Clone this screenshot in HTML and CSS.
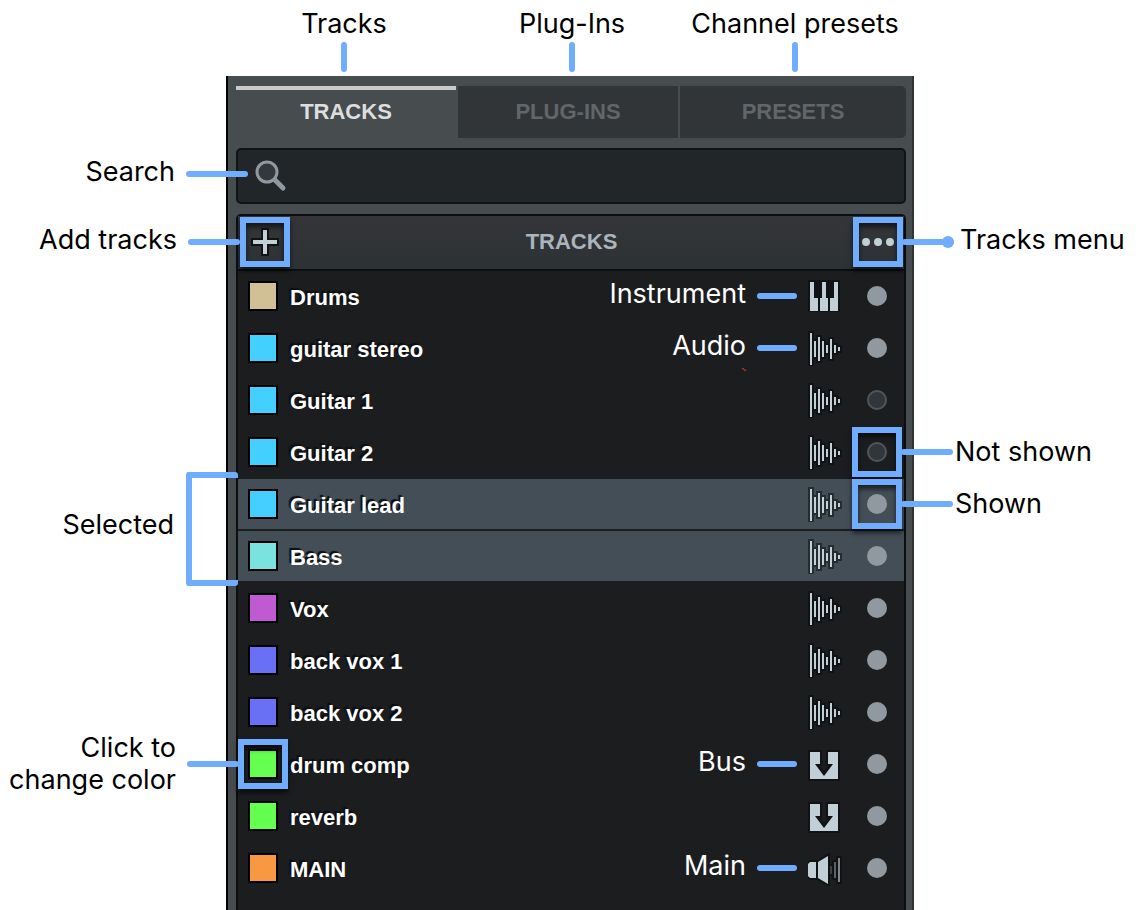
FILE: index.html
```
<!DOCTYPE html>
<html lang="en">
<head>
<meta charset="utf-8">
<title>Track list</title>
<link rel="stylesheet" href="styles.css">
</head>
<body>
<svg class="symbols" aria-hidden="true">
  <symbol id="audio" viewBox="0 0 36 36">
    <path class="edge" d="M2 3h2v32h-2zM6 11h2v16h-2zM10 7h2v24h-2zM14 11h2v16h-2zM18 15h2v8h-2zM22 9h2v20h-2zM26 15h2v8h-2zM30 17h2v4h-2z"/>
    <path class="fill" d="M2 3h2v32h-2zM6 11h2v16h-2zM10 7h2v24h-2zM14 11h2v16h-2zM18 15h2v8h-2zM22 9h2v20h-2zM26 15h2v8h-2zM30 17h2v4h-2z"/>
  </symbol>
  <symbol id="keys" viewBox="0 0 36 36">
    <path class="solid" d="M0 2h32v32h-32z"/>
    <path class="fill" d="M2 4h4v16h4v13h-8zM14 4h4v16h2v13h-8v-13h2zM26 4h4v29h-8v-13h4z"/>
  </symbol>
  <symbol id="bus" viewBox="0 0 36 36">
    <path class="edge" d="M2 6H12V18H8L16 29L24 18H20V6H30V33H2Z"/>
    <path class="fill" d="M2 6H12V18H7L16 30L25 18H20V6H30V33H2Z"/>
  </symbol>
  <symbol id="speaker" viewBox="0 0 36 36">
    <path class="edge" d="M3 12h5v16h-5q-3-2-3-4v-8q0-3 3-4zM10 13L20 6V34L10 28zM22 16h2v8h-2zM26 12h2v16h-2zM30 8h2v24h-2z"/>
    <path class="fill" d="M2 12h6v16h-6l-2-2v-12zM10 12L20 6V34L10 28z"/>
    <path class="wave-near" d="M22 16h2v8h-2z"/>
    <path class="wave-mid" d="M26 12h2v16h-2z"/>
    <path class="wave-far" d="M30 8h2v24h-2z"/>
  </symbol>
</svg>

<header class="top-notes">
  <div class="top-note">Tracks</div>
  <div class="top-note">Plug-Ins</div>
  <div class="top-note">Channel presets</div>
</header>

<main class="panel">
  <nav class="tabs">
    <button class="tab active" type="button">TRACKS</button>
    <button class="tab" type="button">PLUG-INS</button>
    <button class="tab" type="button">PRESETS</button>
  </nav>

  <div class="search">
    <svg class="search-icon" viewBox="0 0 32 32" aria-hidden="true">
      <path class="handle" d="M19 19L28 28"/>
      <circle class="lens" cx="12" cy="12" r="10"/>
    </svg>
    <input class="search-input" type="search" aria-label="Search tracks">
    <div class="note left raised search-note"><span>Search</span><i class="line long"></i></div>
  </div>

  <section class="list">
    <div class="list-head">
      <div class="anchor framed">
        <button class="head-button" type="button" aria-label="Add tracks">
          <svg class="glyph" viewBox="0 0 28 28" aria-hidden="true"><path class="edge" d="M12 2h4v10h10v4h-10v10h-4v-10h-10v-4h10z"/><path class="fill" d="M12 2h4v10h10v4h-10v10h-4v-10h-10v-4h10z"/></svg>
        </button>
        <div class="note left raised"><span>Add tracks</span><i class="line"></i></div>
      </div>
      <h2 class="list-title">TRACKS</h2>
      <div class="anchor framed">
        <button class="head-button" type="button" aria-label="Tracks menu">
          <svg class="dots" viewBox="0 0 36 12" aria-hidden="true"><circle class="fill" cx="6" cy="6" r="4"/><circle class="fill" cx="18" cy="6" r="4"/><circle class="fill" cx="30" cy="6" r="4"/></svg>
        </button>
        <div class="note right raised menu-note"><i class="line dotted"></i><span>Tracks menu</span></div>
      </div>
    </div>

    <ul class="rows">
      <li class="row">
        <div class="anchor"><button class="swatch sand" type="button" aria-label="Drums color"></button></div>
        <span class="name">Drums</span>
        <span class="kind">Instrument</span><i class="line short"></i>
        <svg class="icon"><use href="#keys"/></svg>
        <div class="anchor"><input class="show" type="checkbox" aria-label="Show Drums" checked></div>
      </li>
      <li class="row">
        <div class="anchor"><button class="swatch sky" type="button" aria-label="guitar stereo color"></button></div>
        <span class="name">guitar stereo</span>
        <span class="kind">Audio</span><i class="line short"></i>
        <svg class="speck" viewBox="0 0 4 3" aria-hidden="true"><path d="M0 0L4 3"/></svg>
        <svg class="icon"><use href="#audio"/></svg>
        <div class="anchor"><input class="show" type="checkbox" aria-label="Show guitar stereo" checked></div>
      </li>
      <li class="row">
        <div class="anchor"><button class="swatch sky" type="button" aria-label="Guitar 1 color"></button></div>
        <span class="name">Guitar 1</span>
        <svg class="icon"><use href="#audio"/></svg>
        <div class="anchor"><input class="show" type="checkbox" aria-label="Show Guitar 1"></div>
      </li>
      <li class="row">
        <div class="anchor"><button class="swatch sky" type="button" aria-label="Guitar 2 color"></button></div>
        <span class="name">Guitar 2</span>
        <svg class="icon"><use href="#audio"/></svg>
        <div class="anchor framed">
          <input class="show" type="checkbox" aria-label="Show Guitar 2">
          <div class="note right from-dot"><i class="line"></i><span>Not shown</span></div>
        </div>
      </li>
      <li class="row selected">
        <div class="bracket"><span>Selected</span></div>
        <div class="anchor"><button class="swatch sky" type="button" aria-label="Guitar lead color"></button></div>
        <span class="name">Guitar lead</span>
        <svg class="icon"><use href="#audio"/></svg>
        <div class="anchor framed">
          <input class="show" type="checkbox" aria-label="Show Guitar lead" checked>
          <div class="note right from-dot"><i class="line"></i><span>Shown</span></div>
        </div>
      </li>
      <li class="row selected">
        <div class="anchor"><button class="swatch aqua" type="button" aria-label="Bass color"></button></div>
        <span class="name">Bass</span>
        <svg class="icon"><use href="#audio"/></svg>
        <div class="anchor"><input class="show" type="checkbox" aria-label="Show Bass" checked></div>
      </li>
      <li class="row">
        <div class="anchor"><button class="swatch violet" type="button" aria-label="Vox color"></button></div>
        <span class="name">Vox</span>
        <svg class="icon"><use href="#audio"/></svg>
        <div class="anchor"><input class="show" type="checkbox" aria-label="Show Vox" checked></div>
      </li>
      <li class="row">
        <div class="anchor"><button class="swatch indigo" type="button" aria-label="back vox 1 color"></button></div>
        <span class="name">back vox 1</span>
        <svg class="icon"><use href="#audio"/></svg>
        <div class="anchor"><input class="show" type="checkbox" aria-label="Show back vox 1" checked></div>
      </li>
      <li class="row">
        <div class="anchor"><button class="swatch indigo" type="button" aria-label="back vox 2 color"></button></div>
        <span class="name">back vox 2</span>
        <svg class="icon"><use href="#audio"/></svg>
        <div class="anchor"><input class="show" type="checkbox" aria-label="Show back vox 2" checked></div>
      </li>
      <li class="row">
        <div class="anchor framed">
          <button class="swatch green" type="button" aria-label="drum comp color"></button>
          <div class="note left from-swatch"><span>Click to<br>change color</span><i class="line"></i></div>
        </div>
        <span class="name">drum comp</span>
        <span class="kind">Bus</span><i class="line short"></i>
        <svg class="icon"><use href="#bus"/></svg>
        <div class="anchor"><input class="show" type="checkbox" aria-label="Show drum comp" checked></div>
      </li>
      <li class="row">
        <div class="anchor"><button class="swatch green" type="button" aria-label="reverb color"></button></div>
        <span class="name">reverb</span>
        <svg class="icon"><use href="#bus"/></svg>
        <div class="anchor"><input class="show" type="checkbox" aria-label="Show reverb" checked></div>
      </li>
      <li class="row">
        <div class="anchor"><button class="swatch orange" type="button" aria-label="MAIN color"></button></div>
        <span class="name">MAIN</span>
        <span class="kind">Main</span><i class="line short"></i>
        <svg class="icon"><use href="#speaker"/></svg>
        <div class="anchor"><input class="show" type="checkbox" aria-label="Show MAIN" checked></div>
      </li>
    </ul>
  </section>
</main>
</body>
</html>
```
FILE: styles.css
```
*, *::before, *::after { box-sizing: border-box; }

:root {
  --note: #70adff;
  --ice: #c1cfd7;
  --edge: #101213;
}

body {
  margin: 0;
  min-height: 100vh;
  display: flex;
  flex-direction: column;
  background: #fff;
  color: #000;
  font: 27px/32px Inter, "Liberation Sans", sans-serif;
}

button, input { margin: 0; padding: 0; border: 0; background: none; font: inherit; }

.symbols { position: absolute; width: 0; height: 0; }
.fill { fill: var(--ice); }
.solid { fill: var(--edge); }
.edge { fill: var(--edge); stroke: var(--edge); stroke-width: 4; }
.wave-near { fill: #3c4145; }
.wave-mid { fill: #5a6267; }
.wave-far { fill: #7d878b; }

/* Labels above the panel */
.top-notes {
  display: grid;
  grid-template-columns: 228fr 228fr 218fr;
  height: 76px;
  padding: 8px 232px 4px 230px;
}
.top-note {
  display: flex;
  flex-direction: column;
  align-items: center;
  justify-content: space-between;
  white-space: nowrap;
}
.top-note::after {
  content: "";
  width: 6px;
  height: 30px;
  border-radius: 3px;
  background: var(--note);
}

/* Panel */
.panel {
  flex: 1;
  display: flex;
  flex-direction: column;
  gap: 10px;
  margin: 0 222px 0 226px;
  padding: 10px 6px 0 8px;
  border-left: 2px solid #000;
  border-right: 2px solid #2f3436;
  background: #474c4e;
}

.tabs { display: grid; grid-template-columns: 220fr 220fr 226fr; gap: 2px; }
.tab {
  height: 52px;
  background: #313537;
  color: #626668;
  font: bold 22px/24px "Liberation Sans", Arial, sans-serif;
}
.tab:last-child { border-radius: 0 5px 5px 0; }
.tab.active {
  border-top: 4px solid #c9cbcb;
  padding-bottom: 4px;
  background: none;
  color: #dcdedf;
}

.search {
  position: relative;
  display: flex;
  align-items: center;
  height: 56px;
  padding-left: 17px;
  border: 2px solid #111415;
  border-radius: 5px;
  background: #222629;
}
.search-icon { width: 32px; height: 32px; }
.lens { fill: #34373c; stroke: #8f999f; stroke-width: 3; }
.handle { fill: none; stroke: #8f999f; stroke-width: 5; stroke-linecap: round; }
.search-input { flex: 1; height: 52px; padding: 0 8px; color: #dcdedf; outline: none; }

.list {
  flex: 1;
  border: 2px solid #0c0e0f;
  border-bottom: 0;
  border-radius: 5px 5px 0 0;
  background: #1c1d1f;
}
.list-head {
  display: flex;
  align-items: center;
  justify-content: space-between;
  height: 55px;
  padding: 0 1px 2px 2px;
  border-bottom: 2px solid #0c0e0f;
  background: linear-gradient(#343538, #2d3235);
}
.list-title {
  margin: 0;
  color: #aab4bb;
  font: bold 22px/24px "Liberation Sans", Arial, sans-serif;
}
.head-button { display: grid; place-items: center; width: 50px; height: 50px; }
.glyph { width: 28px; height: 28px; }
.dots { width: 36px; height: 12px; }

.rows { margin: 0; padding: 0; list-style: none; }
.row {
  position: relative;
  display: flex;
  align-items: center;
  height: 52px;
  padding: 0 17px 0 10px;
  border-bottom: 2px solid #1c1d1f;
}
.selected { background: #434e56; --edge: #252c31; }
.name {
  flex: 1;
  padding: 4px 0 0 12px;
  color: #fff;
  font: bold 22px/24px "Liberation Sans", Arial, sans-serif;
  text-shadow: -2px -2px 1px #0c0e0f;
}
.kind { padding-bottom: 4px; color: #fff; }
.short { width: 40px; margin: 0 11px; }
.icon { width: 36px; height: 36px; margin-right: 23px; }
.speck { position: absolute; right: 158px; bottom: 2px; width: 4px; height: 3px; }
.speck path { stroke: #e0503f; }

.swatch { display: block; width: 30px; height: 30px; border: 2px solid #000; }
.sand { background: #d1c096; }
.sky { background: #43cfff; }
.aqua { background: #7be3df; }
.violet { background: #bf5ad3; }
.indigo { background: #6a70f6; }
.green { background: #64ff50; }
.orange { background: #f89843; }

.show {
  display: block;
  appearance: none;
  width: 20px;
  height: 20px;
  border: 2px solid #50565a;
  border-radius: 50%;
  background: #303639;
}
.show:checked { border: 0; background: #8f999f; }

/* Callouts */
.anchor { position: relative; display: grid; place-items: center; }
.framed { z-index: 1; }
.framed::after {
  content: "";
  position: absolute;
  left: 50%;
  top: 50%;
  width: 50px;
  height: 50px;
  border: 6px solid var(--note);
  box-shadow: 0 4px 5px rgba(0, 0, 0, .6), inset 0 4px 5px rgba(0, 0, 0, .6);
  transform: translate(-50%, -50%);
  pointer-events: none;
}
.line {
  flex: none;
  width: 52px;
  height: 6px;
  border-radius: 3px;
  background: var(--note);
}
.short.line { width: 40px; }
.long.line { width: 62px; }
.note {
  position: absolute;
  top: 50%;
  z-index: 1;
  display: flex;
  align-items: center;
  color: #000;
  white-space: nowrap;
  transform: translateY(-50%);
}
.left { right: 100%; gap: 11px; text-align: right; }
.right { left: 100%; gap: 2px; }
.raised span { padding-bottom: 4px; }
.search-note { top: calc(50% - 2px); right: calc(100% - 10px); }
.from-swatch { right: calc(100% + 9px); }
.from-dot { left: calc(100% + 14px); }
.menu-note { left: calc(100% - 1px); gap: 6px; }
.dotted { position: relative; }
.dotted::after {
  content: "";
  position: absolute;
  right: 0;
  top: -3px;
  width: 12px;
  height: 12px;
  border-radius: 50%;
  background: var(--note);
}
.bracket {
  position: absolute;
  right: 100%;
  top: -7px;
  display: flex;
  align-items: center;
  height: 114px;
  color: #000;
}
.bracket span { padding: 0 12px 8px 0; }
.bracket::after {
  content: "";
  align-self: stretch;
  width: 52px;
  border: 6px solid var(--note);
  border-right: 0;
  border-radius: 3px;
}
```
